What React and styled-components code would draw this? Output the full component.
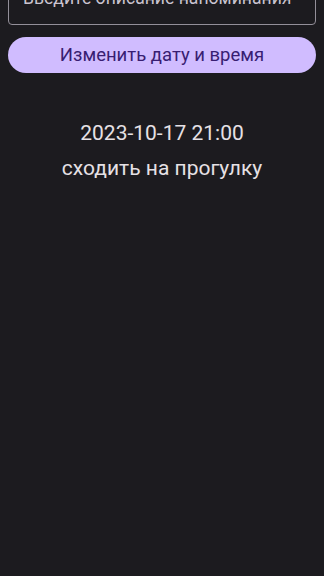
import React from 'react';
import styled, { createGlobalStyle } from 'styled-components';

const GlobalStyle = createGlobalStyle`
  html, body {
    margin: 0;
    padding: 0;
    background: #1c1b1f;
    font-family: Roboto, "Noto Sans", sans-serif;
  }
  #root {
    min-height: 100vh;
    overflow: hidden;
  }
`;

const Screen = styled.div`
  display: flex;
  flex-direction: column;
  padding: 0 8px;
  margin-top: -31px;
  min-height: 100vh;
  background: #1c1b1f;
`;

const Field = styled.div`
  height: 56px;
  box-sizing: border-box;
  border: 1px solid #938f99;
  border-radius: 4px;
  display: flex;
  align-items: center;
  padding: 2px 14px 0;
`;

const Input = styled.input`
  flex: 1;
  min-width: 0;
  border: none;
  outline: none;
  background: transparent;
  color: #e6e1e5;
  font-family: Roboto, sans-serif;
  font-size: 17.6px;
  padding: 0;

  &::placeholder {
    color: #cac4d0;
  }
`;

const Button = styled.button`
  margin-top: 12px;
  height: 36px;
  border: none;
  border-radius: 18px;
  background: #d0bcff;
  color: #381e72;
  font-family: Roboto, sans-serif;
  font-size: 18.5px;
  cursor: pointer;
`;

const Info = styled.div`
  display: flex;
  flex-direction: column;
  align-items: center;
  margin-top: 48px;
  gap: 11px;
  color: #e6e1e5;
`;

const Line = styled.div`
  font-size: 21px;
  line-height: 24px;
`;

export default function App() {
  return (
    <>
      <GlobalStyle />
      <Screen>
        <Field>
          <Input placeholder="Введите описание напоминания" />
        </Field>
        <Button>Изменить дату и время</Button>
        <Info>
          <Line>2023-10-17 21:00</Line>
          <Line>сходить на прогулку</Line>
        </Info>
      </Screen>
    </>
  );
}
